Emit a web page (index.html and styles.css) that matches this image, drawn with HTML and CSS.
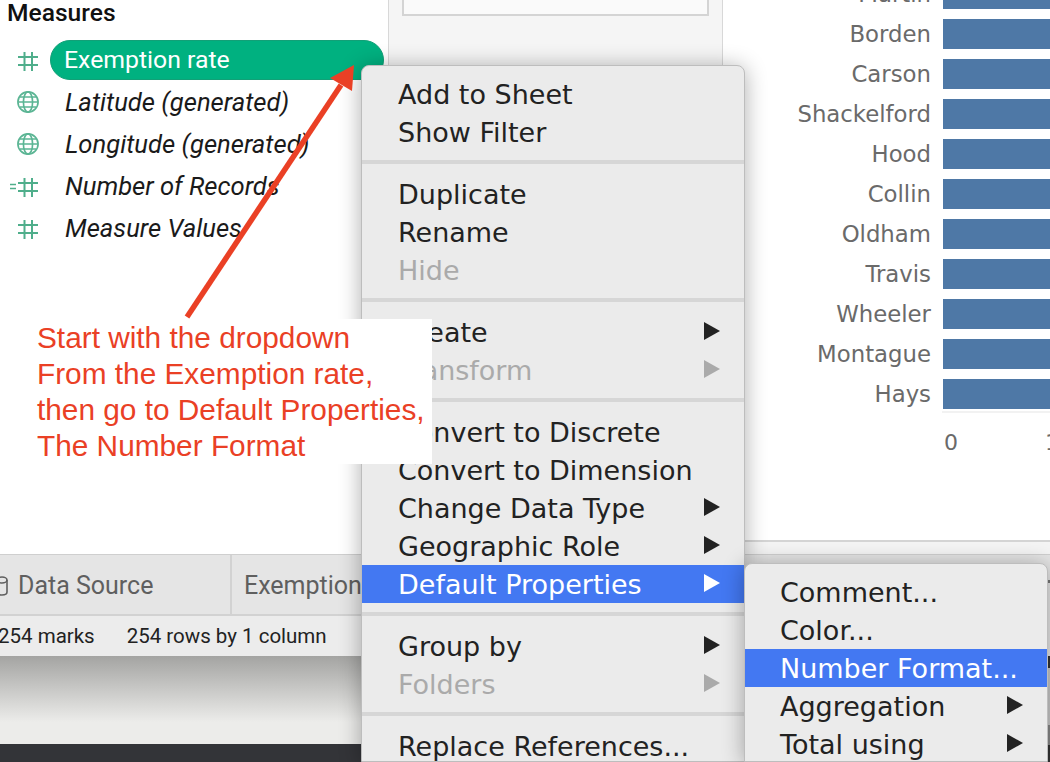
FILE: index.html
```html
<!DOCTYPE html>
<html lang="en">
<head>
  <meta charset="UTF-8" />
  <title>Default Properties menu</title>
  <link rel="stylesheet" href="styles.css">
</head>
<body>
  <div class="app">
    <div class="work">
      <aside class="sidebar">
        <h2>Measures</h2>
        <ul class="fields">
          <li class="field">
            <svg class="ico" viewBox="0 0 22 22"><path d="M7.5 3v19M15 3v19M1 8h20M1 16h20"/></svg>
            <span class="pill">Exemption rate</span>
          </li>
          <li class="field calc">
            <svg class="ico globe" viewBox="0 0 24 24"><circle cx="12" cy="12" r="11"/><ellipse cx="12" cy="12" rx="5" ry="11"/><path d="M1 12h22M3 6.5h18M3 17.5h18"/></svg>
            <span>Latitude (generated)</span>
          </li>
          <li class="field calc">
            <svg class="ico globe" viewBox="0 0 24 24"><circle cx="12" cy="12" r="11"/><ellipse cx="12" cy="12" rx="5" ry="11"/><path d="M1 12h22M3 6.5h18M3 17.5h18"/></svg>
            <span>Longitude (generated)</span>
          </li>
          <li class="field calc">
            <svg class="ico ico-eq" viewBox="0 0 32 22"><path class="eq" d="M3 9.5h6M3 13.5h6"/><path d="M17.5 3v19M25 3v19M11 8h20M11 16h20"/></svg>
            <span>Number of Records</span>
          </li>
          <li class="field calc">
            <svg class="ico" viewBox="0 0 22 22"><path d="M7.5 3v19M15 3v19M1 8h20M1 16h20"/></svg>
            <span>Measure Values</span>
          </li>
        </ul>
      </aside>
      <section class="shelf">
        <div class="shelf-box"></div>
      </section>
      <section class="chart">
        <div class="bars">
          <div class="bar-row"><span>Martin</span><i></i></div>
          <div class="bar-row"><span>Borden</span><i></i></div>
          <div class="bar-row"><span>Carson</span><i></i></div>
          <div class="bar-row"><span>Shackelford</span><i></i></div>
          <div class="bar-row"><span>Hood</span><i></i></div>
          <div class="bar-row"><span>Collin</span><i></i></div>
          <div class="bar-row"><span>Oldham</span><i></i></div>
          <div class="bar-row"><span>Travis</span><i></i></div>
          <div class="bar-row"><span>Wheeler</span><i></i></div>
          <div class="bar-row"><span>Montague</span><i></i></div>
          <div class="bar-row"><span>Hays</span><i></i></div>
        </div>
        <div class="axis-line"></div>
        <div class="axis"><span>0</span><span>1</span></div>
      </section>
    </div>
    <div class="tabs">
      <div class="tab tab-source">
        <svg class="db" viewBox="0 0 8 20"><ellipse cx="2" cy="4" rx="5" ry="3"/><path d="M-3 4v12c0 2 2 3 5 3s5-1 5-3V4"/></svg>
        Data Source
      </div>
      <div class="tab">Exemption rate</div>
    </div>
    <div class="status">
      <span>254 marks</span>
      <span>254 rows by 1 column</span>
    </div>
    <div class="desktop"></div>
    <div class="dock"></div>
  </div>

  <div class="edge"></div>

  <div class="menu main-menu">
    <div class="group">
      <div class="item">Add to Sheet</div>
      <div class="item">Show Filter</div>
    </div>
    <div class="group">
      <div class="item">Duplicate</div>
      <div class="item">Rename</div>
      <div class="item off">Hide</div>
    </div>
    <div class="group">
      <div class="item more">Create</div>
      <div class="item off more">Transform</div>
    </div>
    <div class="group">
      <div class="item">Convert to Discrete</div>
      <div class="item">Convert to Dimension</div>
      <div class="item more">Change Data Type</div>
      <div class="item more">Geographic Role</div>
      <div class="item on more">Default Properties</div>
    </div>
    <div class="group">
      <div class="item more">Group by</div>
      <div class="item off more">Folders</div>
    </div>
    <div class="group">
      <div class="item">Replace References...</div>
    </div>
  </div>

  <div class="menu sub-menu">
    <div class="item">Comment...</div>
    <div class="item">Color...</div>
    <div class="item on">Number Format...</div>
    <div class="item more">Aggregation</div>
    <div class="item more">Total using</div>
  </div>

  <svg class="arrow" viewBox="0 0 1050 762">
    <path class="arrow-line" d="M187 317L341 85"/>
    <path class="arrow-head" d="M354 65L330 78L352 91Z"/>
  </svg>

  <div class="note">Start with the dropdown<br>From the Exemption rate,<br>then go to Default Properties,<br>The Number Format</div>
</body>
</html>
```

FILE: styles.css
```css
* { box-sizing: border-box; }
html, body {
  margin: 0;
  height: 762px;
  overflow: hidden;
}
body {
  position: relative;
  background: #fff;
  font-family: Roboto, sans-serif;
}

.app {
  display: flex;
  flex-direction: column;
  height: 762px;
}
.work {
  display: flex;
  height: 554px;
  background: #f4f4f4;
  flex: none;
}

/* left data pane */
.sidebar {
  width: 389px;
  flex: none;
  background: #fff;
  border-right: 1px solid #d8d8d8;
}
.sidebar h2 {
  margin: 0;
  padding: 0 0 0 7px;
  height: 39px;
  font: 500 24.6px/26px Roboto, sans-serif;
  color: #111;
}
.fields {
  list-style: none;
  margin: 0;
  padding: 0;
}
.field {
  display: flex;
  align-items: center;
  height: 42px;
  padding-left: 17px;
  font: 24.8px Roboto, sans-serif;
  color: #1a1a1a;
}
.field.calc {
  font-size: 25.6px;
  font-style: italic;
}
.field.calc span { margin-left: 26px; }
.ico {
  width: 22px;
  height: 22px;
  flex: none;
  fill: none;
  stroke: #4fae8b;
  stroke-width: 2;
}
.globe {
  stroke: #5bb594;
  stroke-width: 1.8;
}
.ico-eq {
  width: 32px;
  margin-left: -10px;
}
.eq { stroke-width: 1.5; }
.pill {
  width: 334px;
  height: 40px;
  margin-left: 11px;
  padding-left: 13px;
  border-radius: 20px;
  border: 1px solid #12a077;
  background: #00b180;
  color: #fff;
  line-height: 38px;
}

/* middle shelf */
.shelf {
  width: 334px;
  flex: none;
  background: #f5f5f5;
  border-right: 1px solid #d8d8d8;
  padding: 0 13px;
}
.shelf-box {
  height: 16px;
  background: #fafafa;
  border: 2px solid #d4d4d4;
  border-top: 0;
}

/* right bar chart */
.chart {
  flex: 1;
  height: 542px;
  background: #fff;
  border-bottom: 2px solid #d4d4d4;
  overflow: hidden;
}
.bars { margin-top: -26px; }
.bar-row {
  display: flex;
  align-items: center;
  height: 40px;
  color: #6a6a6a;
}
.bar-row span {
  width: 208px;
  flex: none;
  text-align: right;
  font: 22.8px "DejaVu Sans", sans-serif;
}
.bar-row i {
  flex: 1;
  height: 30px;
  margin-left: 12px;
  background: #4e78a6;
}
.axis-line {
  height: 2px;
  margin: -3px 0 0 219px;
  background: #f2f2f2;
}
.axis {
  display: flex;
  gap: 87px;
  margin: 17px 0 0 221px;
  font: 22px "DejaVu Sans", sans-serif;
  color: #6a6a6a;
}

/* bottom bars */
.tabs {
  display: flex;
  height: 62px;
  background: #e5e5e5;
  border-top: 1px solid #cfcfcf;
  border-bottom: 2px solid #d2d2d2;
  flex: none;
}
.tab {
  display: flex;
  align-items: center;
  width: 232px;
  padding: 2px 0 0 12px;
  font: 25px Roboto, sans-serif;
  color: #5f5f5f;
  border-right: 2px solid #d2d2d2;
}
.tab-source {
  gap: 10px;
  padding-left: 0;
}
.db {
  width: 8px;
  height: 20px;
  fill: none;
  stroke: #5f5f5f;
  stroke-width: 1.6;
}
.status {
  display: flex;
  align-items: center;
  gap: 32px;
  height: 40px;
  margin-left: -2px;
  background: #ececec;
  font: 20.5px Roboto, sans-serif;
  color: #222;
  flex: none;
}
.desktop {
  height: 88px;
  background: linear-gradient(#a4a4a2, #ececea 75%);
  flex: none;
}
.dock {
  flex: 1;
  background: #333438;
}
/* sliver of the window behind, right of the submenu */
.edge {
  position: absolute;
  right: 0;
  top: 580px;
  width: 2px;
  height: 182px;
  background: linear-gradient(#777 0 3px, #e6e6e6 3px 76px, #333 76px 88px, #c8c8c8 88px 145px, #888 145px 165px, #333 165px);
}

/* context menus */
.menu {
  position: absolute;
  background: #ebebeb;
  border: 1px solid #bdbdbd;
  border-radius: 8px 8px 0 0;
  box-shadow: 0 2px 22px rgba(0, 0, 0, 0.32);
  font: 27px "DejaVu Sans", sans-serif;
  color: #222;
  overflow: hidden;
}
.main-menu {
  left: 361px;
  top: 65px;
  width: 384px;
  height: 697px;
  padding-top: 9px;
}
.group {
  padding-bottom: 9px;
  margin-bottom: 11px;
  border-bottom: 4px solid #d6d6d6;
}
.group:last-child {
  border-bottom: 0;
}
.item {
  position: relative;
  height: 38px;
  padding-left: 36px;
  line-height: 40px;
  white-space: nowrap;
}
.item.off { color: #aaa; }
.item.on {
  background: #4378f2;
  color: #fff;
}
.item.more::after {
  content: "";
  position: absolute;
  right: 24px;
  top: 9px;
  border-left: 16px solid #222;
  border-top: 9px solid transparent;
  border-bottom: 9px solid transparent;
}
.item.off.more::after { border-left-color: #aaa; }
.item.on.more::after { border-left-color: #fff; }
.sub-menu {
  left: 744px;
  top: 563px;
  width: 304px;
  height: 199px;
  padding-top: 9px;
}
.sub-menu .item { padding-left: 35px; }

/* annotation on top */
.arrow {
  position: absolute;
  left: 0;
  top: 0;
  width: 1050px;
  height: 762px;
  pointer-events: none;
}
.arrow-line {
  fill: none;
  stroke: #ea4025;
  stroke-width: 5.5;
}
.arrow-head { fill: #ea4025; }
.note {
  position: absolute;
  left: 0;
  top: 319px;
  width: 432px;
  height: 145px;
  padding: 1px 0 0 37px;
  background: #fff;
  font: 29.8px/36px "Liberation Sans", Arial, sans-serif;
  color: #ea4025;
  white-space: nowrap;
}
```
